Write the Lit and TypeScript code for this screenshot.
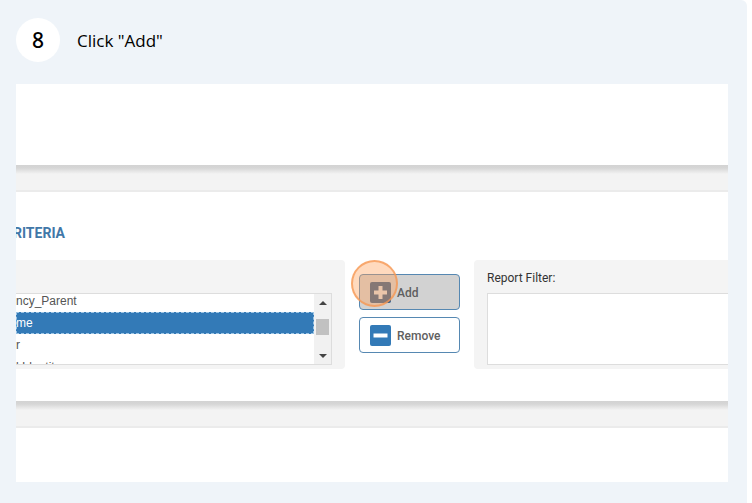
import { LitElement, html, css, svg } from "lit";
import { customElement } from "lit/decorators.js";

@customElement("app-root")
export class AppRoot extends LitElement {
  static styles = css`
    :host { display: block; background: #fff; }
    * { box-sizing: border-box; }
    .step {
      margin-right: 5px; padding: 18px 19px 21px 16px; min-height: 100vh;
      background: #eff4f9; border-top-right-radius: 6px;
    }
    .head { display: flex; align-items: center; gap: 17px; margin-bottom: 22px; height: 44px; font-family: "Noto Sans", sans-serif; color: #000; }
    .num { width: 44px; height: 44px; border-radius: 50%; background: #fff; display: grid; place-items: center; font-size: 21px; line-height: 28px; font-weight: 500; }
    .title { margin: 0; padding-top: 2px; font-family: "Open Sans", "Noto Sans", sans-serif; font-size: 17px; line-height: 24px; font-weight: 400; }
    .shot { position: relative; overflow: hidden; background: #f3f3f3; font-family: Roboto, sans-serif; }
    .band { background: #fff; }
    .band.top { height: 81px; }
    .band.end { height: 54px; }
    .gap { height: 27px; border-bottom: 2px solid #ebebeb; background: linear-gradient(#d3d3d3, #d6d6d6 3px, #f3f3f3 9px); }
    .criteria { padding: 31px 0 32px; }
    h2 { margin: 0 0 17px -3px; font-size: 14px; line-height: 20px; font-weight: 700; color: #4177a8; }
    .cols { display: grid; grid-template-columns: 329px 101px 1fr; column-gap: 14px; }
    .panel { height: 109px; background: #f4f4f4; }
    .panel.left { border-radius: 0 4px 4px 0; padding: 33px 13px 4px 0; }
    .panel.right { border-radius: 4px 0 0 4px; padding: 9px 0 4px 13px; }
    .list { display: flex; height: 72px; border: 1px solid #ddd; border-left: 0; background: #fff; }
    select {
      flex: 1; min-width: 0; height: 70px; border: 0; padding: 0; margin: 0; outline: 0; background: #fff;
      overflow: hidden; font: 12px/16px "Liberation Sans", sans-serif; color: #555; border-radius: 0; scrollbar-width: none;
    }
    option { height: 22px; min-height: 22px; line-height: 16px; padding: 4px 0 2px; white-space: pre; color: #555; }
    option:first-child { margin-top: -4px; }
    option:checked { background: linear-gradient(#337ab7, #337ab7); outline: 1px dashed #9cc4e4; outline-offset: -1px; color: #fff; }
    .bar { width: 17px; background: #f1f1f1; display: flex; flex-direction: column; align-items: center; }
    .bar svg { display: block; width: 17px; height: 17px; }
    .thumb { width: 13px; height: 16px; margin: 8px 0 12px; background: #c1c1c1; }
    .actions { padding-top: 14px; display: flex; flex-direction: column; gap: 7px; }
    button {
      height: 36px; padding: 0 0 0 10px; display: flex; align-items: center; gap: 6px;
      border: 1px solid #5688b2; border-radius: 4px; background: #fff;
      font: 500 12px/20px Roboto, sans-serif; color: #606060;
    }
    button span { padding-top: 2px; }
    button.add { background: #d2d2d2; }
    button svg { width: 21px; height: 21px; flex: none; }
    .ring { position: absolute; left: 335px; top: 176px; width: 47px; height: 47px; border-radius: 50%; border: 2px solid rgba(246, 151, 83, .75); background: rgba(255, 163, 92, .4); pointer-events: none; }
    label { display: block; font-size: 12px; line-height: 18px; color: #333; margin-bottom: 6px; }
    textarea { display: block; width: 100%; height: 72px; border: 1px solid #ddd; border-right: 0; background: #fff; resize: none; outline: 0; margin: 0; }
  `;

  private arrow(d: string) {
    return html`<svg viewBox="0 0 17 17" aria-hidden="true">${svg`<path d=${d} fill="#444"/>`}</svg>`;
  }

  render() {
    return html`
      <main class="step">
        <header class="head">
          <div class="num">8</div>
          <p class="title">Click "Add"</p>
        </header>
        <div class="shot">
          <div class="band top"></div>
          <div class="gap"></div>
          <section class="band criteria">
            <h2 id="criteria">RITERIA</h2>
            <div class="cols">
              <div class="panel left">
                <div class="list">
                  <select size="4" multiple aria-labelledby="criteria">
                    <option>ncy_Parent</option>
                    <option selected>me</option>
                    <option>r</option>
                    <option>l Identity</option>
                  </select>
                  <div class="bar">
                    ${this.arrow("M5 11 L9 7 L13 11Z")}
                    <div class="thumb"></div>
                    ${this.arrow("M5 7 L9 11 L13 7Z")}
                  </div>
                </div>
              </div>
              <div class="actions">
                <button class="add" type="button">
                  <svg viewBox="0 0 21 21" aria-hidden="true"><rect width="21" height="21" rx="2" fill="#345c86"/><path d="M10.500 4v13M4 10.500h13" stroke="#dcdcdc" stroke-width="4"/></svg>
                  <span>Add</span>
                </button>
                <button type="button">
                  <svg viewBox="0 0 21 21" aria-hidden="true"><rect width="21" height="21" rx="2" fill="#337ab7"/><path d="M3.500 10.500h14" stroke="#fff" stroke-width="4"/></svg>
                  <span>Remove</span>
                </button>
              </div>
              <div class="panel right">
                <label for="filter">Report Filter:</label>
                <textarea id="filter"></textarea>
              </div>
            </div>
          </section>
          <div class="gap"></div>
          <div class="band end"></div>
          <div class="ring"></div>
        </div>
      </main>
    `;
  }
}
